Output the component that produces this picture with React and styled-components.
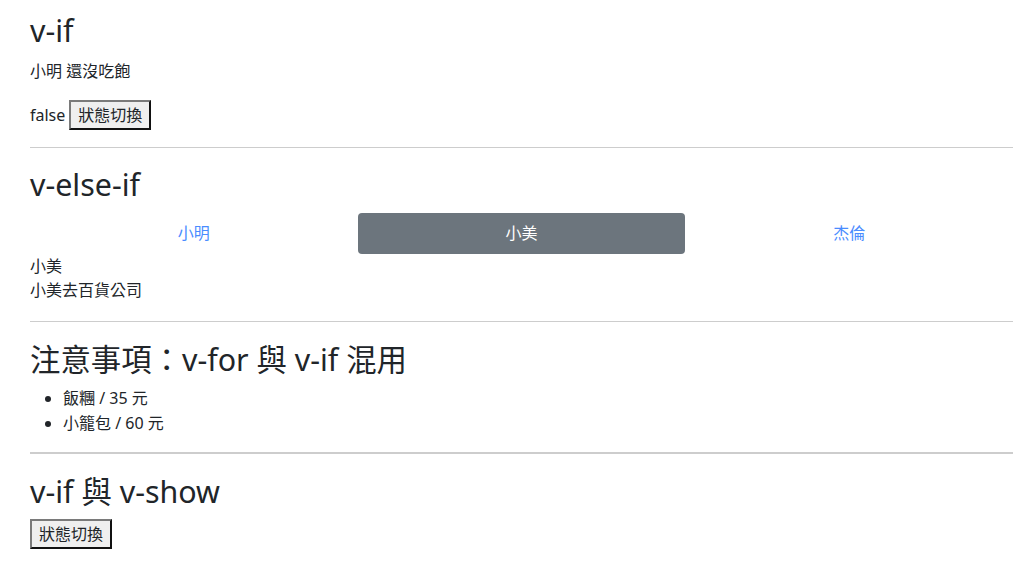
import React, { useState } from "react";
import styled, { createGlobalStyle } from "styled-components";

const Global = createGlobalStyle`
  html, body { margin: 0; padding: 0; background: #fff; }
  body {
    font-family: "Noto Sans", "Noto Sans CJK TC", sans-serif;
    font-size: 16px;
    line-height: 24px;
    color: #212529;
  }
  * { box-sizing: border-box; }
`;

const Page = styled.div`
  padding: 12.5px 11px 0 30px;
`;

const Title = styled.h2`
  margin: 0 0 ${(p) => p.$mb || 8}px;
  font-size: 30.4px;
  line-height: 36.5px;
  font-weight: 400;
  color: #212529;
`;

const Para = styled.p`
  margin: 0 0 ${(p) => p.$mb ?? 16}px;
`;

const Line = styled.div``;

const Row = styled.div`
  display: flex;
  align-items: center;
  gap: 4px;
  height: 30px;
`;

const Button = styled.button`
  font: inherit;
  font-size: 16px;
  line-height: 24px;
  height: 30px;
  padding: 1px 7px;
  background: #efefef;
  color: #212529;
  border: 2px solid;
  border-color: #7a7a7a #111 #111 #7a7a7a;
  border-radius: 0;
  cursor: pointer;
`;

const Rule = styled.hr`
  margin: ${(p) => p.$mt}px 0 ${(p) => p.$mb}px;
  border: 0;
  border-top: ${(p) => p.$w || 1}px solid #cdcdcd;
  height: 0;
`;

const Nav = styled.nav`
  display: flex;
  margin-bottom: 0;
`;

const Pill = styled.a`
  flex: 1 1 0;
  text-align: center;
  padding: 8px 16px 9px;
  line-height: 24px;
  border-radius: 4px;
  text-decoration: none;
  cursor: pointer;
  background: ${(p) => (p.$active ? "#6c757d" : "transparent")};
  color: ${(p) => (p.$active ? "#fff" : "#4a8cff")};
`;

const List = styled.ul`
  margin: 0;
  padding-left: 33px;
  li { line-height: 24.5px; }
`;

export default function App() {
  const [full, setFull] = useState(false);
  const [who, setWho] = useState("小美");
  const [show, setShow] = useState(true);
  const people = ["小明", "小美", "杰倫"];
  const place = { 小明: "小明去圖書館", 小美: "小美去百貨公司", 杰倫: "杰倫去錄音室" };

  return (
    <Page>
      <Global />
      <Title $mb={10}>v-if</Title>
      <Para $mb={17}>{full ? "小明 吃飽了" : "小明 還沒吃飽"}</Para>
      <Row>
        <span>{String(full)}</span>
        <Button onClick={() => setFull(!full)}>狀態切換</Button>
      </Row>
      <Rule $mt={17} $mb={18.5} />

      <Title $mb={10}>v-else-if</Title>
      <Nav>
        {people.map((p) => (
          <Pill key={p} $active={who === p} onClick={() => setWho(p)}>
            {p}
          </Pill>
        ))}
      </Nav>
      <Line>{who}</Line>
      <Line>{place[who]}</Line>
      <Rule $mt={19} $mb={19.5} />

      <Title $mb={8}>注意事項：v-for 與 v-if 混用</Title>
      <List>
        <li>飯糰 / 35 元</li>
        <li>小籠包 / 60 元</li>
      </List>
      <Rule $mt={17} $w={2} $mb={19.5} />

      <Title $mb={9}>v-if 與 v-show</Title>
      <Button onClick={() => setShow(!show)}>狀態切換</Button>
    </Page>
  );
}
